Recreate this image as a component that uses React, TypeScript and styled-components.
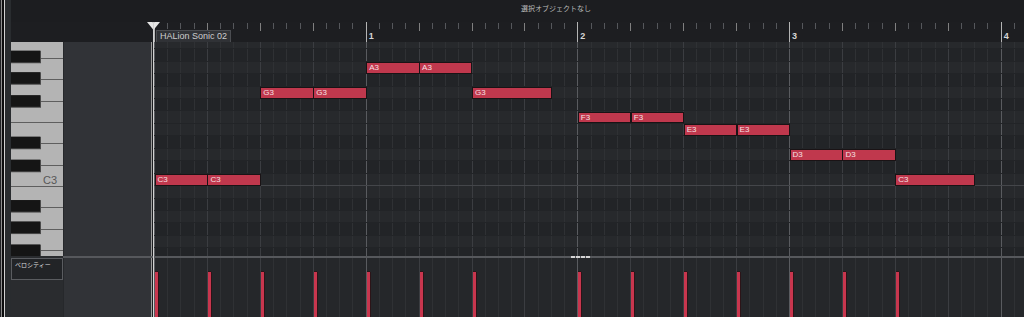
import React from 'react';
import styled, { createGlobalStyle } from 'styled-components';

// grid metrics (px)
const BAR = 211.667;
const BEAT = BAR / 4;
const SIX = BAR / 16;
const ROW = 149.333 / 12;
const TOP_PITCH = 59; // B3, first (partly hidden) row
const ROW_OFFSET = -5.2;

const GlobalStyle = createGlobalStyle`
  html, body {
    margin: 0;
    padding: 0;
    background: #1c1d20;
  }
  body {
    width: 1024px;
    height: 317px;
    overflow: hidden;
    font-family: "Liberation Sans", Arial, sans-serif;
  }
`;

const gridLines = `
  background-image:
    repeating-linear-gradient(to right, #595b5f 0 1px, transparent 1px ${BAR}px),
    repeating-linear-gradient(to right, #3b3d41 0 1px, transparent 1px ${BEAT}px),
    repeating-linear-gradient(to right, #2f3134 0 1px, transparent 1px ${SIX}px);
`;

const Window = styled.div`
  position: relative;
  display: flex;
  width: 1024px;
  height: 317px;
  overflow: hidden;
  background: #1c1d20;
`;

const EdgeStrip = styled.div`
  flex: none;
  width: 11px;
  background: linear-gradient(
    to right,
    #202124 0 1px,
    #8e8e8e 1px 2px,
    #0c0c0d 2px 4px,
    #d2d2d2 4px 5px,
    #292c2f 5px
  );
`;

const Main = styled.div`
  flex: 1;
  min-width: 0;
  display: flex;
  flex-direction: column;
`;

const TopBar = styled.div`
  flex: none;
  height: 22px;
  padding-left: 510px;
  background: #1c1d20;
  color: #bababa;
  font-family: "Noto Sans CJK JP", sans-serif;
  font-size: 7px;
  line-height: 17px;
  white-space: nowrap;
`;

const RulerRow = styled.div`
  flex: none;
  display: flex;
  height: 20px;
  background: #1d1e21;
`;

const RulerLead = styled.div`
  flex: none;
  width: 143px;
`;

const RulerTicks = styled.div`
  position: relative;
  flex: 1;
  background-image:
    repeating-linear-gradient(to right, #b4b4b4 0 1px, transparent 1px ${BAR}px),
    repeating-linear-gradient(to right, #808080 0 1px, transparent 1px ${BEAT}px),
    repeating-linear-gradient(to right, #55575b 0 1px, transparent 1px ${SIX}px);
  background-size: 100% 100%, 100% 8px, 100% 6px;
  background-position: 0 0, 0 1px, 0 1px;
  background-repeat: no-repeat;
`;

const BarNumber = styled.span`
  position: absolute;
  top: 9px;
  color: #d6d6d6;
  font-size: 9px;
  font-weight: bold;
  line-height: 10px;
`;

const RegionTag = styled.div`
  position: absolute;
  left: 2px;
  top: 8px;
  height: 12px;
  box-sizing: border-box;
  padding: 0 3px;
  background: #303236;
  border: 1px solid #4b4d51;
  border-bottom: none;
  color: #cdcdcd;
  font-size: 9px;
  line-height: 11px;
  white-space: nowrap;
`;

const EditorRow = styled.div`
  flex: none;
  display: flex;
  height: 214px;
`;

const KeyboardBox = styled.div`
  flex: none;
  width: 52px;
  background: #b4b4b4;
  svg {
    display: block;
  }
`;

const SidePanel = styled.div`
  flex: none;
  width: 89px;
  box-sizing: border-box;
  background: #313337;
  border-left: 1px solid #26282b;
  border-right: 1px solid #9a9a9a;
`;

const Gap = styled.div`
  flex: none;
  width: 2px;
  background: #1c1d20;
`;

const NoteCanvas = styled.div`
  position: relative;
  flex: 1;
  overflow: hidden;
`;

const RowStack = styled.div`
  display: flex;
  flex-direction: column;
  margin-top: ${ROW_OFFSET}px;
`;

const LaneRow = styled.div<{ $black: boolean; $octave: boolean }>`
  flex: none;
  height: ${ROW}px;
  background-color: ${(p) => (p.$black ? '#222427' : '#27292c')};
  ${gridLines}
  box-shadow: inset 0 -1px 0 ${(p) => (p.$octave ? '#44464a' : '#222427')};
`;

const Note = styled.div`
  position: absolute;
  box-sizing: border-box;
  height: ${ROW - 1}px;
  padding-left: 2px;
  background: #c0384d;
  border: 1px solid #1a1315;
  color: #f6e0e4;
  font-size: 8px;
  line-height: 9px;
  overflow: hidden;
  white-space: nowrap;
`;

const DividerRow = styled.div`
  flex: none;
  display: flex;
  height: 2px;
`;

const DividerLead = styled.div`
  flex: none;
  width: 52px;
  background: #2a2c2f;
`;

const DividerLine = styled.div`
  position: relative;
  flex: 1;
  background: #56585c;
`;

const DividerGrip = styled.div`
  position: absolute;
  left: 508px;
  top: 0;
  width: 19px;
  height: 2px;
  background: repeating-linear-gradient(to right, #d4d4d4 0 4px, #56585c 4px 5px);
`;

const VelocityRow = styled.div`
  flex: 1;
  display: flex;
`;

const VelocityColumn = styled.div`
  flex: none;
  width: 52px;
  display: flex;
  flex-direction: column;
  background: #2a2c2f;
`;

const VelocityLabel = styled.div`
  height: 22px;
  box-sizing: border-box;
  padding: 2px 0 0 3px;
  background: #222427;
  border: 1px solid #5a5c60;
  color: #dcdcdc;
  font-family: "Noto Sans CJK JP", sans-serif;
  font-size: 6px;
  line-height: 8px;
`;

const VelocityLane = styled.div`
  position: relative;
  flex: 1;
  background-color: #25272a;
  ${gridLines}
`;

const VelocityBar = styled.div`
  position: absolute;
  top: 14px;
  bottom: 0;
  width: 3px;
  background: #c8364e;
  box-shadow: 1px 0 0 #2c1418, 0 -1px 0 #2c1418;
`;

const Playhead = styled.div`
  position: absolute;
  left: 147px;
  top: 22px;
  bottom: 0;
  width: 13px;
  pointer-events: none;
  svg {
    position: absolute;
    left: 0;
    top: 0;
  }
`;

const PlayheadLine = styled.div`
  position: absolute;
  left: 6px;
  top: 0;
  bottom: 0;
  width: 1px;
  background: #d2d2d2;
`;

type NoteData = { beat: number; len: number; pitch: number; name: string };

const notes: NoteData[] = [
  { beat: 0, len: 1, pitch: 48, name: 'C3' },
  { beat: 1, len: 1, pitch: 48, name: 'C3' },
  { beat: 2, len: 1, pitch: 55, name: 'G3' },
  { beat: 3, len: 1, pitch: 55, name: 'G3' },
  { beat: 4, len: 1, pitch: 57, name: 'A3' },
  { beat: 5, len: 1, pitch: 57, name: 'A3' },
  { beat: 6, len: 1.5, pitch: 55, name: 'G3' },
  { beat: 8, len: 1, pitch: 53, name: 'F3' },
  { beat: 9, len: 1, pitch: 53, name: 'F3' },
  { beat: 10, len: 1, pitch: 52, name: 'E3' },
  { beat: 11, len: 1, pitch: 52, name: 'E3' },
  { beat: 12, len: 1, pitch: 50, name: 'D3' },
  { beat: 13, len: 1, pitch: 50, name: 'D3' },
  { beat: 14, len: 1.5, pitch: 48, name: 'C3' },
];

const BLACK = [1, 3, 6, 8, 10];
const rows = Array.from({ length: 18 }, (_, i) => TOP_PITCH - i);

function Keyboard() {
  const c3Bottom = 144;
  const oct = 149.333;
  const whiteH = oct / 7;
  const blackFromBottom = [20.5, 43.5, 85, 108, 129.5];

  const lines = [];
  for (let k = -3; k <= 8; k++) {
    const y = Math.round(c3Bottom - k * whiteH) + 0.5;
    lines.push(<line key={k} x1={0} x2={52} y1={y} y2={y} stroke="#5e5e5e" strokeWidth={1} />);
  }

  const blacks = [];
  for (const o of [-1, 0, 1]) {
    for (const off of blackFromBottom) {
      const cy = c3Bottom + o * oct - off;
      const y = cy - 5.75;
      blacks.push(
        <g key={`${o}-${off}`}>
          <rect x={0} y={y} width={30} height={12.5} fill="#4a4a4a" />
          <rect x={0} y={y} width={29} height={11.5} fill="#151515" />
        </g>
      );
    }
  }

  return (
    <svg width={52} height={214} viewBox="0 0 52 214">
      <rect x={0} y={0} width={52} height={214} fill="#b4b4b4" />
      {lines}
      {blacks}
      <text
        x={46}
        y={141.5}
        textAnchor="end"
        fontFamily="Liberation Sans, Arial, sans-serif"
        fontSize={11}
        fill="#575757"
      >
        C3
      </text>
    </svg>
  );
}

export default function App() {
  return (
    <>
      <GlobalStyle />
      <Window>
        <EdgeStrip />
        <Main>
          <TopBar>選択オブジェクトなし</TopBar>

          <RulerRow>
            <RulerLead />
            <RulerTicks>
              <RegionTag>HALion Sonic 02</RegionTag>
              {[1, 2, 3, 4].map((n) => (
                <BarNumber key={n} style={{ left: n * BAR + 3 }}>
                  {n}
                </BarNumber>
              ))}
            </RulerTicks>
          </RulerRow>

          <EditorRow>
            <KeyboardBox>
              <Keyboard />
            </KeyboardBox>
            <SidePanel />
            <Gap />
            <NoteCanvas>
              <RowStack>
                {rows.map((p) => (
                  <LaneRow key={p} $black={BLACK.includes(p % 12)} $octave={p % 12 === 0} />
                ))}
              </RowStack>
              {notes.map((n, i) => (
                <Note
                  key={i}
                  style={{
                    left: n.beat * BEAT + 0.5,
                    width: n.len * BEAT + 0.5,
                    top: ROW_OFFSET + (TOP_PITCH - n.pitch) * ROW + 0.5,
                  }}
                >
                  {n.name}
                </Note>
              ))}
            </NoteCanvas>
          </EditorRow>

          <DividerRow>
            <DividerLead />
            <DividerLine>
              <DividerGrip />
            </DividerLine>
          </DividerRow>

          <VelocityRow>
            <VelocityColumn>
              <VelocityLabel>ベロシティー</VelocityLabel>
            </VelocityColumn>
            <SidePanel />
            <Gap />
            <VelocityLane>
              {notes.map((n, i) => (
                <VelocityBar key={i} style={{ left: n.beat * BEAT + 1 }} />
              ))}
            </VelocityLane>
          </VelocityRow>
        </Main>

        <Playhead>
          <svg width={13} height={8} viewBox="0 0 13 8">
            <polygon points="0,0 13,0 6.5,8" fill="#e6e6e6" />
            <polygon points="5.5,0 7.5,0 6.5,2" fill="#8a8a8a" />
          </svg>
          <PlayheadLine />
        </Playhead>
      </Window>
    </>
  );
}
